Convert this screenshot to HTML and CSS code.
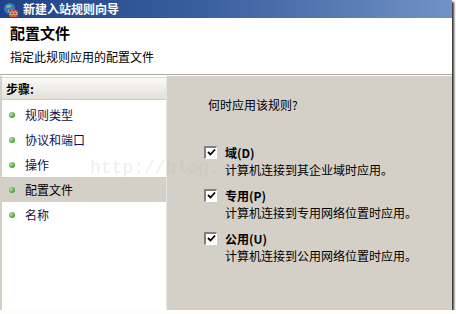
FILE: index.html
```html
<!DOCTYPE html>
<html lang="zh-CN">

<head>
    <meta charset="UTF-8" />
    <title>新建入站规则向导</title>
    <link rel="stylesheet" href="styles.css">
</head>

<body>
    <div class="window">
        <div class="titlebar">
            <svg class="app-icon" width="15" height="15" viewBox="0 0 15 15">
                <circle cx="6.5" cy="6.5" r="5.5" fill="#3a78c8" />
                <path d="M3 4 Q6 2 9 4 Q7 6 4 6 Z" fill="#7fc06a" />
                <path d="M5 8 Q8 7 10 9 Q7 11 5 10 Z" fill="#7fc06a" />
                <rect x="6" y="8" width="9" height="7" fill="#c0402a" />
                <path d="M6 10.3 H15 M6 12.6 H15 M9 8 V10.3 M12 8 V10.3 M7.5 10.3 V12.6 M10.5 10.3 V12.6 M13.5 10.3 V12.6 M9 12.6 V15 M12 12.6 V15" stroke="#f0d0b0" stroke-width="0.6" />
            </svg>
            <span class="title">新建入站规则向导</span>
        </div>

        <div class="header">
            <h1>配置文件</h1>
            <p>指定此规则应用的配置文件</p>
        </div>

        <div class="main">
            <div class="steps">
                <div class="steps-head">步骤:</div>
                <ul>
                    <li><span class="dot"></span>规则类型</li>
                    <li><span class="dot"></span>协议和端口</li>
                    <li><span class="dot"></span>操作</li>
                    <li class="current"><span class="dot"></span>配置文件</li>
                    <li><span class="dot"></span>名称</li>
                </ul>
            </div>

            <div class="content">
                <p class="question">何时应用该规则?</p>

                <div class="option">
                    <div class="option-row">
                        <span class="checkbox">
                            <svg width="9" height="9" viewBox="0 0 9 9"><path d="M1 4 L3.5 6.5 L8 1.5" stroke="#000" stroke-width="1.8" fill="none" /></svg>
                        </span>
                        <b>域(D)</b>
                    </div>
                    <div class="desc">计算机连接到其企业域时应用。</div>
                </div>

                <div class="option">
                    <div class="option-row">
                        <span class="checkbox">
                            <svg width="9" height="9" viewBox="0 0 9 9"><path d="M1 4 L3.5 6.5 L8 1.5" stroke="#000" stroke-width="1.8" fill="none" /></svg>
                        </span>
                        <b>专用(P)</b>
                    </div>
                    <div class="desc">计算机连接到专用网络位置时应用。</div>
                </div>

                <div class="option">
                    <div class="option-row">
                        <span class="checkbox">
                            <svg width="9" height="9" viewBox="0 0 9 9"><path d="M1 4 L3.5 6.5 L8 1.5" stroke="#000" stroke-width="1.8" fill="none" /></svg>
                        </span>
                        <b>公用(U)</b>
                    </div>
                    <div class="desc">计算机连接到公用网络位置时应用。</div>
                </div>
            </div>
        </div>

        <!-- watermark laid over the screenshot -->
        <div class="watermark">http://blog.</div>
    </div>
</body>

</html>
```

FILE: styles.css
```css
body {
    margin: 0;
    background-color: #fdfdfb;
    font-family: "Noto Sans CJK SC", "DejaVu Sans", sans-serif;
    font-size: 12px;
    color: #000;
}

.window {
    position: relative;
    width: 452px;
    height: 310px;
    background-color: #d4d0c8;
    box-shadow: 2px 2px 2px #333;
    overflow: hidden;
}

.titlebar {
    height: 18px;
    display: flex;
    align-items: center;
    gap: 5px;
    padding-left: 3px;
    background: linear-gradient(to right, #1f4388, #3a5f9e 45%, #7092c6);
    color: #fff;
}

.titlebar .title {
    font-weight: bold;
    font-size: 12px;
    line-height: 18px;
}

.header {
    height: 56px;
    background-color: #fff;
    border-bottom: 1px solid #aca899;
    padding-left: 10px;
}

.header h1 {
    margin: 0;
    padding-top: 5px;
    font-size: 15px;
    line-height: 20px;
    font-weight: bold;
}

.header p {
    margin: 0;
    padding-top: 6px;
    font-size: 12px;
    line-height: 16px;
}

.main {
    display: flex;
    height: 234px;
    border-top: 1px solid #fff;
}

.steps {
    width: 164px;
    background-color: #fff;
    border-left: 2px solid #d4d0c8;
    border-right: 1px solid #e8e6e0;
    padding-top: 1px;
}

.steps-head {
    height: 21px;
    line-height: 21px;
    padding-left: 4px;
    font-weight: bold;
    background: linear-gradient(to bottom, #fafaf8, #e2e0d8);
    border-top: 1px solid #d8d6ce;
    border-bottom: 1px solid #d0cec6;
}

.steps ul {
    list-style: none;
    margin: 2px 0 0;
    padding: 0;
}

.steps li {
    height: 25px;
    display: flex;
    align-items: center;
    gap: 10px;
    padding-left: 7px;
    color: #10104a;
}

.steps li.current {
    background-color: #d4d0c8;
    color: #000;
}

.dot {
    width: 6px;
    height: 6px;
    border-radius: 50%;
    background: radial-gradient(circle at 35% 35%, #b8e4a0, #4a9a3a 70%);
}

.content {
    flex: 1;
    background-color: #d4d0c8;
    padding-left: 37px;
}

.question {
    margin: 0;
    padding-top: 21px;
    padding-left: 4px;
    line-height: 16px;
}

.option {
    margin-top: 30px;
}

.option + .option {
    margin-top: 7px;
}

.option-row {
    display: flex;
    align-items: center;
    gap: 8px;
    height: 18px;
}

.checkbox {
    width: 10px;
    height: 10px;
    display: flex;
    align-items: center;
    justify-content: center;
    background-color: #fff;
    border-top: 2px solid #808080;
    border-left: 2px solid #808080;
    border-right: 1px solid #fff;
    border-bottom: 1px solid #fff;
}

.desc {
    padding-left: 21px;
    line-height: 18px;
}

.watermark {
    position: absolute;
    left: 90px;
    top: 158px;
    font-family: "Liberation Mono", monospace;
    font-size: 18px;
    color: rgba(180, 180, 180, 0.25);
    pointer-events: none;
}
```
